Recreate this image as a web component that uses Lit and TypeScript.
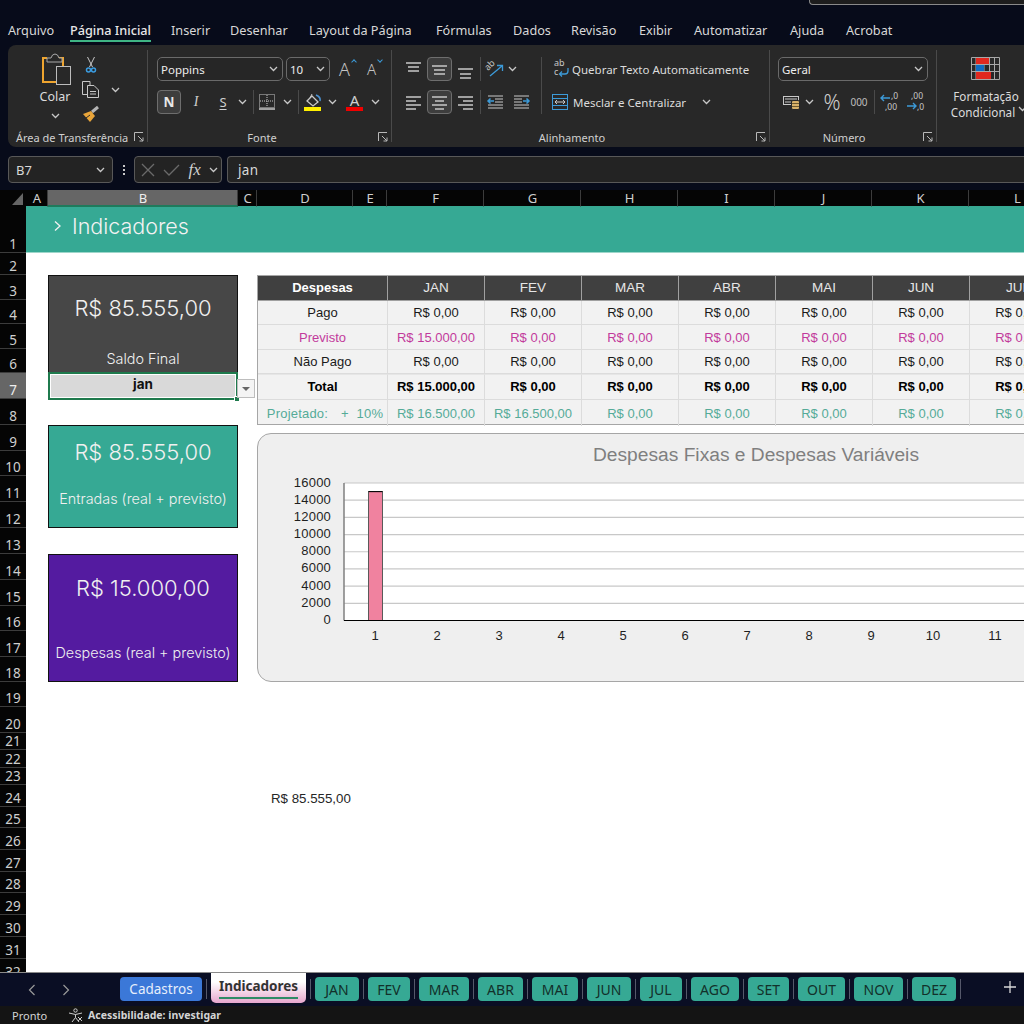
import { LitElement, html, css, svg } from 'lit';
import { customElement } from 'lit/decorators.js';

const UI = css`
  * { box-sizing: border-box; }
  svg { overflow: visible; }
`;

const chev = html`<svg class="chev" width="9" height="6" viewBox="0 0 9 6"><path d="M1 1l3.500 3.500L8 1" fill="none" stroke="#c8c8c8" stroke-width="1.300"/></svg>`;

const launcher = html`<svg class="launcher" width="10" height="10" viewBox="0 0 10 10"><path d="M.5 9V.5H9M4 4l5 5M9 5.500V9H5.500" fill="none" stroke="#b8b8b8"/></svg>`;

// page coordinates as viewBox, so the icons can be read straight off the screenshot
const icon = (x: number, y: number, w: number, h: number, body: unknown) =>
  html`<svg width=${w} height=${h} viewBox="${x} ${y} ${w} ${h}">${body}</svg>`;

const bars = (x: number, y: number, rows: [number, number, number][], stroke = '#c9c9c9') =>
  icon(x, y, 18, 18, rows.map(([a, b, ly]) => svg`<path d="M${x + a} ${y + ly}H${x + b}" stroke=${stroke} stroke-width="1.300"/>`));

const ICONS = {
  paste: icon(43, 53, 30, 32, svg`
    <path d="M48 58H44V82H57M59 58H64V66" fill="none" stroke="#efa52f" stroke-width="2"/>
    <path d="M48 62V58H52Q53 54 56 54T60 58H63V62Z" fill="#282828" stroke="#a8a8a8"/>
    <rect x="57.500" y="66.500" width="14" height="18" fill="#282828" stroke="#bdbdbd"/>`),
  cut: icon(84, 53, 14, 18, svg`
    <path d="M87.500 54L92.500 64M94.500 54L89.500 64" stroke="#c8c8c8" fill="none"/>
    <circle cx="88.500" cy="67" r="2" fill="none" stroke="#3b9ce0" stroke-width="1.500"/>
    <circle cx="93.500" cy="67" r="2" fill="none" stroke="#3b9ce0" stroke-width="1.500"/>`),
  copy: icon(82, 79, 18, 18, svg`
    <path d="M87 92.500H82.500V79.500H90V83" fill="none" stroke="#c8c8c8"/>
    <path d="M87.500 83.500H94L98.500 88V95.500H87.500Z" fill="#282828" stroke="#c8c8c8"/>
    <path d="M90 89.500H96M90 92H96" stroke="#c8c8c8"/>`),
  brush: icon(82, 106, 18, 17, svg`
    <path d="M92 112L98 107" stroke="#b5b5b5" stroke-width="3"/>
    <path d="M83 114L91 111L95 116L90 122Z" fill="#e9a53a"/>
    <path d="M86 118L90 115" stroke="#282828"/>`),
  borders: icon(260, 94, 17, 17, svg`
    <rect x="260.500" y="94.500" width="15" height="13" fill="none" stroke="#c8c8c8" stroke-dasharray="1 1"/>
    <path d="M268 95V107M261 101H275" stroke="#c8c8c8" stroke-dasharray="1 1"/>
    <path d="M260 109H276" stroke="#c8c8c8" stroke-width="1.600"/>`),
  fill: icon(305, 92, 18, 19, svg`
    <path d="M313 95L319 101L314 105L308 100Z" fill="none" stroke="#c8c8c8" stroke-width="1.300"/>
    <path d="M311 97L313 93" stroke="#c8c8c8"/>
    <path d="M317 94Q322 96 321 100" fill="none" stroke="#4a90d0" stroke-width="1.600"/>
    <rect x="305" y="106" width="17" height="4" fill="#ffef00"/>`),
  colorA: icon(347, 92, 18, 19, svg`
    <text x="355.500" y="105" text-anchor="middle" font-size="15" fill="#cfcfcf" font-family="Noto Sans, sans-serif">A</text>
    <rect x="347" y="106" width="17" height="4" fill="#f00000"/>`),
  orient: icon(487, 59, 18, 20, svg`
    <text x="0" y="0" transform="translate(489 71) rotate(-45)" font-size="9" fill="#c8c8c8" font-family="Noto Sans, sans-serif">ab</text>
    <path d="M491 76L503 66M498 65.500H503.500V71" fill="none" stroke="#3c9ad8" stroke-width="1.300"/>`),
  wrap: icon(555, 61, 15, 18, svg`
    <text x="555" y="67" font-size="9" fill="#c8c8c8" font-family="Noto Sans, sans-serif">ab</text>
    <text x="555" y="76" font-size="9" fill="#c8c8c8" font-family="Noto Sans, sans-serif">c</text>
    <path d="M569 69V72Q569 75 566 75H561M563 72.500L560.500 75L563 77.500" fill="none" stroke="#3c9ad8" stroke-width="1.300"/>`),
  merge: icon(552, 94, 17, 17, svg`
    <rect x="553.500" y="94.500" width="15" height="15" fill="none" stroke="#3c9ad8"/>
    <path d="M554 98.500H568M554 105.500H568" stroke="#3c9ad8"/>
    <path d="M556 102H566M558 100L556 102L558 104M564 100L566 102L564 104" fill="none" stroke="#c8c8c8"/>`),
  indentL: icon(488, 94, 17, 16, svg`
    <path d="M489 96H504M496 99H504M496 102H504M489 105H504M489 108H504" stroke="#c9c9c9"/>
    <path d="M489 101H495M491.500 98.500L489 101L491.500 103.500" fill="none" stroke="#3c9ad8" stroke-width="1.500"/>`),
  indentR: icon(515, 94, 17, 16, svg`
    <path d="M516 96H531M516 99H524M516 102H524M516 105H531M516 108H531" stroke="#c9c9c9"/>
    <path d="M525 101H531M528.500 98.500L531 101L528.500 103.500" fill="none" stroke="#3c9ad8" stroke-width="1.500"/>`),
  money: icon(781, 96, 20, 15, svg`
    <rect x="782.500" y="97.500" width="15" height="8" fill="none" stroke="#c8c8c8"/>
    <path d="M784 100H796M784 103H790" stroke="#c8c8c8"/>
    <rect x="790.500" y="101.500" width="8" height="9" rx="1.500" fill="#d9b26a" stroke="#282828"/>
    <path d="M791 104.500H798M791 107.500H798" stroke="#6e5a30"/>`),
  decUp: icon(880, 94, 20, 18, svg`
    <text x="891" y="100" font-size="8.500" fill="#c8c8c8" font-family="Noto Sans, sans-serif">,0</text>
    <text x="885" y="111" font-size="8.500" fill="#c8c8c8" font-family="Noto Sans, sans-serif">,00</text>
    <path d="M881 99H890M884 96L881 99L884 102" fill="none" stroke="#3c9ad8" stroke-width="1.400"/>`),
  decDown: icon(906, 94, 20, 18, svg`
    <text x="911" y="100" font-size="8.500" fill="#c8c8c8" font-family="Noto Sans, sans-serif">,00</text>
    <text x="917" y="111" font-size="8.500" fill="#c8c8c8" font-family="Noto Sans, sans-serif">,0</text>
    <path d="M907 107H916M913 104L916 107L913 110" fill="none" stroke="#3c9ad8" stroke-width="1.400"/>`),
  condFmt: icon(972, 57, 30, 24, svg`
    <path d="M972.500 57.500H1000.500V79.500H972.500ZM977 58V79M985 58V79M990.500 58V79M995.500 58V79M973 64.500H1000M973 71.500H1000" stroke="#a8a8a8" fill="none"/>
    <rect x="977" y="58" width="13" height="6" fill="#e0281f"/>
    <rect x="977" y="65" width="8" height="6" fill="#0f6cc4"/>
    <rect x="977" y="72" width="15" height="7" fill="#e0281f"/>`),
};

const lines = {
  top: bars(404, 59, [[1, 16, 3], [3, 14, 7], [3, 14, 11]]),
  middle: bars(431, 59, [[1, 16, 6], [3, 14, 10], [3, 14, 14]]),
  bottom: bars(457, 59, [[1, 16, 9], [3, 14, 14], [3, 14, 18]]),
  left: bars(404, 91, [[1, 16, 4], [1, 11, 8], [1, 16, 12], [1, 11, 16]]),
  center: bars(431, 91, [[1, 16, 4], [4, 13, 8], [1, 16, 12], [4, 13, 16]]),
  right: bars(457, 91, [[1, 16, 4], [6, 16, 8], [1, 16, 12], [6, 16, 16]]),
};

@customElement('excel-ribbon')
export class ExcelRibbon extends LitElement {
  static styles = [UI, css`
    :host {
      display: flex;
      height: 102px;
      margin-left: 8px;
      background: #282828;
      border-radius: 8px 0 0 8px;
      overflow: hidden;
      color: #dcdcdc;
      font: 12px "Noto Sans", sans-serif;
    }
    svg { display: block; flex: none; }
    .vsep { flex: none; width: 1px; margin: 5px 0; background: #4a4a4a; }
    .group { flex: none; display: flex; flex-direction: column; padding-top: 12px; }
    .body { flex: 1; min-height: 0; }
    .foot {
      flex: none;
      height: 20px;
      display: flex;
      align-items: center;
      justify-content: center;
      position: relative;
      font-size: 11px;
      color: #d0d0d0;
    }
    .launcher { position: absolute; right: 3px; top: 5px; }
    .rows { display: flex; flex-direction: column; gap: 9px; }
    .row { display: flex; align-items: center; height: 24px; }
    .btn { flex: none; height: 24px; display: flex; align-items: center; justify-content: center; }
    .btn.on { background: #3d3d3d; border: 1.500px solid #6e6e6e; border-radius: 4px; }
    .isep { flex: none; width: 1px; height: 24px; background: #4a4a4a; }
    .field {
      flex: none;
      height: 24px;
      display: flex;
      align-items: center;
      justify-content: space-between;
      padding: 0 4px 0 3px;
      border: 1px solid #6a6a6a;
      border-radius: 5px;
      background: #262626;
      color: #ececec;
      font-size: 11.500px;
    }

    .clip { width: 139px; padding-top: 8px; }
    .clip .body { display: flex; }
    .paste {
      width: 50px;
      margin-left: 22px;
      display: flex;
      flex-direction: column;
      align-items: center;
    }
    .paste svg:first-child { margin-left: 4px; }
    .paste span { margin: 3px 0 8px; font-size: 12.500px; }
    .minis { display: flex; flex-direction: column; }
    .mini { height: 26px; display: flex; align-items: center; gap: 11px; padding-left: 2px; }
    .mini .cut { margin-left: 2px; }
    .clip .foot { justify-content: flex-start; padding-left: 8px; }

    .font { width: 243px; padding-left: 9px; }
    .font .foot { padding-right: 24px; }
    .gro { font-size: 18px; color: #c4c4c4; font-weight: 300; position: relative; }
    .gro i {
      position: absolute; top: 3px; right: 2px;
      width: 4px; height: 4px; border: solid #3c9ad8;
      border-width: 1.500px 0 0 1.500px; transform: rotate(45deg);
    }
    .gro.down { font-size: 15px; }
    .gro.down i { transform: rotate(225deg); top: 1px; right: 3px; }
    .bold { font: bold 13.500px "Noto Sans", sans-serif; color: #e8e8e8; }
    .ital { font: italic 14px "Liberation Serif", serif; color: #cfcfcf; }
    .und { font-size: 13px; color: #cfcfcf; text-decoration: underline; text-underline-offset: 2px; }

    .align { width: 377px; }
    .align .body { display: flex; padding-left: 8px; }
    .align .foot { padding-right: 17px; }
    .wide { margin-left: 4px; }
    .wide .row { gap: 5px; font-size: 11.500px; }

    .num { width: 166px; padding-left: 8px; }
    .num .foot { padding-right: 26px; }
    .pct { font: 300 21px "Noto Sans", sans-serif; color: #cfcfcf; }
    .mil { font-size: 10px; color: #bdbdbd; }

    .cond {
      flex: none;
      width: 98px;
      padding-top: 12px;
      display: flex;
      flex-direction: column;
      align-items: center;
      font-size: 11.700px;
      line-height: 16px;
    }
    .cond svg:first-child { margin-bottom: 7px; }
    .cond .l2 { display: flex; align-items: center; gap: 3px; margin-left: 6px; }
  `];

  render() {
    return html`
      <div class="group clip">
        <div class="body">
          <div class="paste">${ICONS.paste}<span>Colar</span>${chev}</div>
          <div class="minis">
            <div class="mini"><span class="cut">${ICONS.cut}</span></div>
            <div class="mini">${ICONS.copy}${chev}</div>
            <div class="mini">${ICONS.brush}</div>
          </div>
        </div>
        <div class="foot">Área de Transferência ${launcher}</div>
      </div>
      <div class="vsep"></div>

      <div class="group font">
        <div class="body rows">
          <div class="row">
            <div class="field" style="width:126px">Poppins ${chev}</div>
            <div class="field" style="width:44px;margin-left:3px">10 ${chev}</div>
            <div class="btn gro" style="width:27px;margin-left:1px">A<i></i></div>
            <div class="btn gro down" style="width:27px">A<i></i></div>
          </div>
          <div class="row">
            <div class="btn on bold" style="width:24px">N</div>
            <div class="btn ital" style="width:28px;margin-left:1px">I</div>
            <div class="btn und" style="width:26px">S</div>
            <div class="btn" style="width:12px">${chev}</div>
            <div class="isep" style="margin-left:5px"></div>
            <div class="btn" style="width:26px">${ICONS.borders}</div>
            <div class="btn" style="width:14px">${chev}</div>
            <div class="isep" style="margin-left:4px"></div>
            <div class="btn" style="width:28px">${ICONS.fill}</div>
            <div class="btn" style="width:10px">${chev}</div>
            <div class="btn" style="width:26px;margin-left:5px">${ICONS.colorA}</div>
            <div class="btn" style="width:14px">${chev}</div>
          </div>
        </div>
        <div class="foot">Fonte ${launcher}</div>
      </div>
      <div class="vsep"></div>

      <div class="group align">
        <div class="body">
          <div class="rows">
            <div class="row">
              <div class="btn" style="width:27px">${lines.top}</div>
              <div class="btn on" style="width:25px">${lines.middle}</div>
              <div class="btn" style="width:27px">${lines.bottom}</div>
              <div class="isep" style="margin-left:1px"></div>
              <div class="btn" style="width:26px;margin-left:1px">${ICONS.orient}</div>
              <div class="btn" style="width:8px">${chev}</div>
            </div>
            <div class="row">
              <div class="btn" style="width:27px">${lines.left}</div>
              <div class="btn on" style="width:25px">${lines.center}</div>
              <div class="btn" style="width:27px">${lines.right}</div>
              <div class="isep" style="margin-left:1px"></div>
              <div class="btn" style="width:26px;margin-left:1px">${ICONS.indentL}</div>
              <div class="btn" style="width:26px">${ICONS.indentR}</div>
            </div>
          </div>
          <div class="isep" style="height:57px;margin-left:7px"></div>
          <div class="rows wide">
            <div class="row" style="margin-left:8px">${ICONS.wrap}<span style="margin-left:-2px">Quebrar Texto Automaticamente</span></div>
            <div class="row" style="margin-left:5px">${ICONS.merge}<span>Mesclar e Centralizar</span><span style="margin-left:11px">${chev}</span></div>
          </div>
        </div>
        <div class="foot">Alinhamento ${launcher}</div>
      </div>
      <div class="vsep"></div>

      <div class="group num">
        <div class="body rows">
          <div class="row"><div class="field" style="width:150px">Geral ${chev}</div></div>
          <div class="row">
            <div class="btn" style="width:28px">${ICONS.money}</div>
            <div class="btn" style="width:7px">${chev}</div>
            <div class="btn pct" style="width:32px;margin-left:3px">%</div>
            <div class="btn mil" style="width:22px">000</div>
            <div class="isep" style="margin-left:4px"></div>
            <div class="btn" style="width:26px;margin-left:2px">${ICONS.decUp}</div>
            <div class="btn" style="width:26px">${ICONS.decDown}</div>
          </div>
        </div>
        <div class="foot">Número ${launcher}</div>
      </div>
      <div class="vsep"></div>

      <div class="cond">
        ${ICONS.condFmt}
        <span>Formatação</span>
        <span class="l2">Condicional ${chev}</span>
      </div>
    `;
  }
}

const MONTHS = ['JAN', 'FEV', 'MAR', 'ABR', 'MAI', 'JUN', 'JUL', 'AGO', 'SET', 'OUT', 'NOV', 'DEZ'];
const ROW_HEIGHTS = [46, 22, 25, 24, 25, 24, 26, 26, 26, 25, 26, 26, 26, 26, 26, 25, 26, 25, 25, 26, 17, 18, 17, 22, 21, 22, 22, 21, 22, 22, 22, 22];
const COLS: [string, number][] = [['A', 22], ['B', 190], ['C', 19], ['D', 96], ['E', 34], ['F', 97], ['G', 97], ['H', 97], ['I', 97], ['J', 97], ['K', 97], ['L', 97]];

const brl = (n: number) => 'R$ ' + n.toLocaleString('de-DE', { minimumFractionDigits: 2 });

const previsto = MONTHS.map((_, i) => (i === 0 ? 15000 : 0));
const projetado = MONTHS.map((_, i) => (i < 2 ? 16500 : 0));

@customElement('despesas-table')
export class DespesasTable extends LitElement {
  static styles = [UI, css`
    :host {
      display: grid;
      grid-template-columns: 130px repeat(12, 97px);
      grid-template-rows: 25px 24px 25px 24px 26px 26px;
      width: max-content;
      border: 1px solid #a6a6a6;
      background: #f2f2f2;
      font: 13px "Liberation Sans", Arial, sans-serif;
      color: #1a1a1a;
    }
    div {
      display: flex;
      align-items: center;
      justify-content: center;
      white-space: nowrap;
      border-right: 1px solid #dcdcdc;
      border-bottom: 1px solid #dcdcdc;
    }
    .head { background: #404040; color: #e6e6e6; border-color: #a0a0a0; padding-bottom: 2px; font-size: 13.500px; }
    .head.title { color: #fff; font-weight: bold; font-size: 13px; }
    .prev { color: #c23a9c; }
    .tot { font-weight: bold; color: #000; border-top: 1px solid #e6e6e6; padding-bottom: 2px; }
    .proj { color: #55ab98; border-bottom: 0; }
    .projlabel { gap: 13px; padding-left: 5px; letter-spacing: .2px; }
  `];

  render() {
    const row = (label: string, vals: number[], cls = '') => html`
      <div class=${cls}>${label}</div>
      ${vals.map(v => html`<div class=${cls}>${brl(v)}</div>`)}`;
    const zero = MONTHS.map(() => 0);
    return html`
      <div class="head title">Despesas</div>
      ${MONTHS.map(m => html`<div class="head">${m}</div>`)}
      ${row('Pago', zero)}
      ${row('Previsto', previsto, 'prev')}
      ${row('Não Pago', zero)}
      ${row('Total', previsto, 'tot')}
      <div class="proj projlabel"><span>Projetado:</span><span>+&nbsp; 10%</span></div>
      ${projetado.map(v => html`<div class="proj">${brl(v)}</div>`)}
    `;
  }
}

@customElement('despesas-chart')
export class DespesasChart extends LitElement {
  static styles = [UI, css`
    :host {
      display: block;
      width: 998px;
      height: 249px;
      margin-top: 8px;
      background: #efefef;
      border: 1px solid #a6a6a6;
      border-radius: 14px;
      font-family: "Liberation Sans", Arial, sans-serif;
    }
    .title {
      height: 41px;
      padding-top: 9px;
      text-align: center;
      font-size: 19.200px;
      line-height: 24px;
      color: #7f7f7f;
    }
    svg { display: block; }
    text { font-size: 13px; fill: #1f1f1f; }
  `];

  render() {
    // svg origin sits at x=258, y=475 on the page
    const left = 86, right = 830, top = 8, bottom = 145.5;
    const step = (bottom - top) / 8;
    const ticks = [0, 2000, 4000, 6000, 8000, 10000, 12000, 14000, 16000];
    const y = (v: number) => bottom - (v / 16000) * (bottom - top);
    return html`
      <div class="title">Despesas Fixas e Despesas Variáveis</div>
      <svg width="996" height="207" viewBox="0 0 996 207">
        <rect x=${left} y=${top} width=${right - left} height=${bottom - top} fill="#fff"/>
        ${ticks.slice(1).map(t => svg`<path d="M${left} ${y(t)}H${right}" stroke="#c8c8c8" stroke-width="1.200"/>`)}
        ${ticks.map(t => svg`<text x="73" y=${y(t) + 3.500} text-anchor="end" letter-spacing=".2">${t}</text>`)}
        <path d="M${left} ${top}V${bottom}" stroke="#7f7f7f" stroke-width="1.500"/>
        <rect x="110.500" y=${y(15000)} width="14" height=${(15000 / 16000) * step * 8} fill="#f0829f" stroke="#5a5a5a"/>
        <path d="M110.500 ${y(15000)}H124.500" stroke="#000"/>
        <path d="M${left} ${bottom}H${right}" stroke="#000" stroke-width="1.200"/>
        ${MONTHS.map((_, i) => svg`<text x=${117 + i * 62} y="165" text-anchor="middle">${i + 1}</text>`)}
      </svg>
    `;
  }
}

@customElement('excel-sheet')
export class ExcelSheet extends LitElement {
  static styles = [UI, css`
    :host {
      display: flex;
      flex-direction: column;
      height: 782px;
      overflow: hidden;
      font-family: "Noto Sans", sans-serif;
    }
    .colhead {
      flex: none;
      height: 17px;
      display: flex;
      background: #050505;
      color: #cfcfcf;
      font-size: 13px;
      line-height: 16px;
    }
    .corner { flex: none; width: 26px; display: flex; justify-content: flex-end; padding: 3px 3px 0 0; }
    .col {
      flex: none;
      padding-left: 1px;
      text-align: center;
      border-right: 1px solid #3c3c3c;
      border-bottom: 1px solid #38a892;
    }
    .col.sel { background: #666; color: #eee; border-bottom: 2px solid #1f7a5c; }
    .bodywrap { flex: 1; display: flex; min-height: 0; }
    .rowhead { flex: none; width: 26px; background: #050505; color: #cfcfcf; font-size: 13.500px; }
    .rownum {
      display: flex;
      align-items: flex-end;
      justify-content: center;
      line-height: 16px;
      border-bottom: 1px solid #3c3c3c;
      overflow: hidden;
    }
    .rownum.sel { background: #666; color: #eee; }
    .grid {
      flex: 1;
      display: grid;
      align-content: start;
      grid-template-columns: 22px 190px 19px 96px 34px repeat(12, 97px);
      background: #fff;
      overflow: hidden;
    }
    .banner {
      grid-column: 1 / -1;
      grid-row: 1;
      display: flex;
      align-items: center;
      gap: 10px;
      padding: 0 0 8px 27px;
      background: #36a994;
      border-bottom: 1px solid #9ed6ca;
      color: #f2f2f2;
      font: 300 21.500px "Inter", sans-serif;
    }
    .banner svg { flex: none; }
    .card {
      grid-column: 2;
      display: flex;
      flex-direction: column;
      align-items: center;
      border: 1px solid #111;
      color: #f0f0f0;
      font-family: "Inter", sans-serif;
      font-weight: 300;
    }
    .card b { font-weight: 300; font-size: 22px; line-height: 28px; }
    .card span { font-size: 14.400px; line-height: 18px; white-space: nowrap; }
    .saldo { grid-row: 3 / 7; background: #474747; padding-top: 18px; }
    .saldo span { margin-top: 28px; }
    .entradas { grid-row: 9 / 13; background: #36a994; padding-top: 12px; }
    .entradas span { margin-top: 24px; }
    .desp { grid-row: 14 / 19; background: #541ba0; padding-top: 19px; }
    .desp span { margin-top: 42px; }
    .sel-cell {
      grid-column: 2;
      grid-row: 7;
      position: relative;
      z-index: 1;
      background: #d9d9d9;
      border: 2px solid #1f7a4d;
      box-shadow: inset 0 0 0 1px #fff;
      margin-top: -1px;
      margin-bottom: -1px;
      text-align: center;
      font: 700 13.500px/20px "Inter", sans-serif;
      color: #111;
    }
    .sel-cell i {
      position: absolute;
      right: -4px;
      bottom: -4px;
      width: 6px;
      height: 6px;
      background: #1f7a4d;
      border: 1px solid #fff;
    }
    .sel-cell u {
      position: absolute;
      left: 100%;
      top: 5px;
      width: 18px;
      height: 19px;
      margin-left: 1px;
      background: #f4f4f4;
      border: 1px solid #bdbdbd;
      display: flex;
      align-items: center;
      justify-content: center;
    }
    .sel-cell u::after {
      content: "";
      border: solid transparent;
      border-width: 4px 4px 0;
      border-top-color: #666;
    }
    despesas-table { grid-column: 4 / -1; grid-row: 3 / 9; }
    despesas-chart { grid-column: 4 / -1; grid-row: 9 / 19; }
    .saldo-note {
      grid-column: 4 / 6;
      grid-row: 24;
      padding: 4px 0 0 14px;
      align-self: center;
      font: 13.300px "Liberation Sans", Arial, sans-serif;
      color: #262626;
      white-space: nowrap;
    }
  `];

  render() {
    return html`
      <div class="colhead">
        <div class="corner"><svg width="11" height="12" viewBox="0 0 11 12"><path d="M11 0V12H0Z" fill="#666"/></svg></div>
        ${COLS.map(([c, w]) => html`<div class="col ${c === 'B' ? 'sel' : ''}" style="width:${w}px">${c}</div>`)}
        <div class="col" style="flex:1"></div>
      </div>
      <div class="bodywrap">
        <div class="rowhead">
          ${ROW_HEIGHTS.map((h, i) => html`<div class="rownum ${i === 6 ? 'sel' : ''}" style="height:${h}px">${i + 1}</div>`)}
        </div>
        <div class="grid" style="grid-template-rows:${ROW_HEIGHTS.map(h => h + 'px').join(' ')}">
          <div class="banner">
            <svg width="9" height="12" viewBox="0 0 9 12"><path d="M2 1.500L7 6L2 10.500" fill="none" stroke="#f2f2f2" stroke-width="1.300"/></svg>
            Indicadores
          </div>
          <div class="card saldo"><b>R$ 85.555,00</b><span>Saldo Final</span></div>
          <div class="sel-cell">jan<i></i><u></u></div>
          <div class="card entradas"><b>R$ 85.555,00</b><span>Entradas (real + previsto)</span></div>
          <div class="card desp"><b>R$ 15.000,00</b><span>Despesas (real + previsto)</span></div>
          <despesas-table></despesas-table>
          <despesas-chart></despesas-chart>
          <div class="saldo-note">R$ 85.555,00</div>
        </div>
      </div>
    `;
  }
}

const TABS: [string, number][] = [['JAN', 44], ['FEV', 42], ['MAR', 50], ['ABR', 45], ['MAI', 46], ['JUN', 44], ['JUL', 42], ['AGO', 48], ['SET', 41], ['OUT', 47], ['NOV', 49], ['DEZ', 44]];

@customElement('sheet-tabs')
export class SheetTabs extends LitElement {
  static styles = [UI, css`
    :host {
      display: flex;
      align-items: flex-start;
      height: 34px;
      padding-left: 120px;
      position: relative;
      background: #0a0e24;
      border-top: 1px solid #8a8a8a;
      font: 14px "Noto Sans", sans-serif;
    }
    .nav { position: absolute; left: 28px; top: 11px; display: flex; gap: 26px; }
    .tab {
      flex: none;
      height: 24px;
      margin-top: 4px;
      display: flex;
      align-items: center;
      justify-content: center;
      border-radius: 4px;
      background: #36a994;
      color: #12302a;
    }
    .tab.blue { width: 82px; background: #3b78d8; color: #e6eefb; font-size: 13.500px; }
    .tab.active {
      width: 95px;
      height: 30px;
      margin-top: 0;
      padding-bottom: 5px;
      position: relative;
      border-radius: 0 0 5px 5px;
      background: linear-gradient(#fff 30%, #e6a6cd);
      color: #333;
      font-weight: 700;
      font-size: 13.500px;
    }
    .tab.active::after {
      content: "";
      position: absolute;
      left: 8px;
      right: 8px;
      bottom: 4px;
      height: 2px;
      background: #2e8b66;
    }
    .sep { flex: none; width: 1px; height: 20px; margin: 6px 4px 0; background: #55586a; }
    .plus { position: absolute; left: 1003px; top: 7px; width: 14px; height: 14px; }
  `];

  render() {
    return html`
      <div class="nav">
        <svg width="8" height="12" viewBox="0 0 8 12"><path d="M6.500 1L1.500 6L6.500 11" fill="none" stroke="#9a9a9a" stroke-width="1.200"/></svg>
        <svg width="8" height="12" viewBox="0 0 8 12"><path d="M1.500 1L6.500 6L1.500 11" fill="none" stroke="#9a9a9a" stroke-width="1.200"/></svg>
      </div>
      <div class="tab blue">Cadastros</div>
      <div class="sep"></div>
      <div class="tab active">Indicadores</div>
      <div class="sep"></div>
      ${TABS.map(([t, w]) => html`<div class="tab" style="width:${w}px">${t}</div><div class="sep"></div>`)}
      <svg class="plus" viewBox="0 0 14 14"><path d="M7 1V13M1 7H13" stroke="#d8d8d8" stroke-width="1.300"/></svg>
    `;
  }
}

// left edge of each menu item in the screenshot, used to size the item before it
const MENU: [string, number][] = [['Arquivo', 8], ['Página Inicial', 70], ['Inserir', 171], ['Desenhar', 230], ['Layout da Página', 309], ['Fórmulas', 436], ['Dados', 513], ['Revisão', 571], ['Exibir', 639], ['Automatizar', 694], ['Ajuda', 790], ['Acrobat', 846]];

@customElement('app-root')
export class AppRoot extends LitElement {
  static styles = [UI, css`
    :host {
      display: block;
      width: 1024px;
      height: 1024px;
      overflow: hidden;
      background: #070b1a;
      color: #d8d8d8;
      font: 12.700px "Noto Sans", sans-serif;
    }
    .search {
      height: 5px;
      margin-left: 809px;
      background: #1d1d1d;
      border: 1px solid #8a8a8a;
      border-top: 0;
      border-right: 0;
      border-radius: 0 0 0 4px;
    }
    .menu { height: 40px; display: flex; padding: 15px 0 0 8px; line-height: 20px; }
    .menu div { flex: none; }
    .menu span { position: relative; display: inline-block; white-space: nowrap; }
    .menu .on { font-weight: 500; color: #e8e8e8; }
    .menu .on::after {
      content: "";
      position: absolute;
      left: 0;
      right: 0;
      top: 20px;
      height: 2px;
      background: #3fb585;
    }
    .fbar { height: 27px; margin: 9px 0 7px 8px; display: flex; align-items: stretch; }
    .fbox { flex: none; display: flex; align-items: center; border: 1px solid #585858; border-radius: 4px; background: #232323; }
    .name { width: 105px; padding: 0 7px; justify-content: space-between; color: #d8d8d8; font-size: 13px; }
    .dots { flex: none; width: 21px; display: flex; flex-direction: column; align-items: center; justify-content: center; gap: 2px; }
    .dots i { width: 2px; height: 2px; background: #c8c8c8; }
    .fn { width: 88px; padding: 0 3px 0 6px; justify-content: space-between; }
    .input { flex: 1; margin-left: 5px; padding-left: 10px; border-right: 0; border-radius: 4px 0 0 4px; font-size: 13.500px; color: #d8d8d8; letter-spacing: .3px; }
    .fx { font: italic 17px "Liberation Serif", serif; color: #d0d0d0; }
    .status { height: 18px; display: flex; align-items: center; background: #141414; font-size: 11px; color: #d4d4d4; padding-left: 12px; }
    .status b { margin-left: 5px; font-weight: 700; font-size: 10.500px; }
    .status svg { margin-left: 21px; }
  `];

  render() {
    return html`
      <div class="search"></div>
      <div class="menu">
        ${MENU.map(([m, x], i) => html`<div style=${i < MENU.length - 1 ? `width:${MENU[i + 1][1] - x}px` : ''}><span class=${m === 'Página Inicial' ? 'on' : ''}>${m}</span></div>`)}
      </div>
      <excel-ribbon></excel-ribbon>
      <div class="fbar">
        <div class="fbox name">B7 ${chev}</div>
        <div class="dots"><i></i><i></i><i></i></div>
        <div class="fbox fn">
          <svg width="14" height="14" viewBox="0 0 14 14"><path d="M1 1L13 13M13 1L1 13" stroke="#6a6a6a" stroke-width="1.300"/></svg>
          <svg width="17" height="14" viewBox="0 0 17 14"><path d="M1 7L6 12L16 2" fill="none" stroke="#6a6a6a" stroke-width="1.300"/></svg>
          <span class="fx">fx</span>
          ${chev}
        </div>
        <div class="fbox input">jan</div>
      </div>
      <excel-sheet></excel-sheet>
      <sheet-tabs></sheet-tabs>
      <div class="status">
        Pronto
        <svg width="15" height="15" viewBox="0 0 15 15"><circle cx="7.500" cy="2.500" r="1.700" fill="none" stroke="#ccc"/><path d="M1 5L7.500 6.500L14 5M7.500 6.500V9.500L4 14M7.500 9.500L11 14M10 9L14 13M14 9L10 13" fill="none" stroke="#ccc"/></svg>
        <b>Acessibilidade: investigar</b>
      </div>
    `;
  }
}
